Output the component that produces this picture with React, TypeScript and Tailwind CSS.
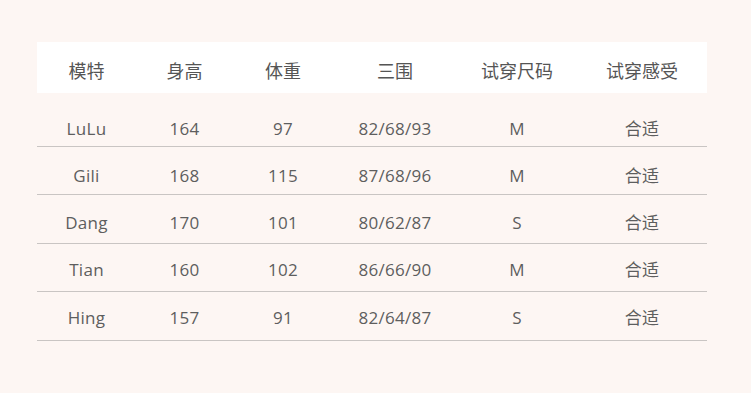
import React from "react";

const cols = ["w-[99px]", "w-[97px]", "w-[100px]", "w-[124px]", "w-[120px]", "w-[130px]"];
const headers = ["模特", "身高", "体重", "三围", "试穿尺码", "试穿感受"];
const rows = [
  ["LuLu", "164", "97", "82/68/93", "M", "合适"],
  ["Gili", "168", "115", "87/68/96", "M", "合适"],
  ["Dang", "170", "101", "80/62/87", "S", "合适"],
  ["Tian", "160", "102", "86/66/90", "M", "合适"],
  ["Hing", "157", "91", "82/64/87", "S", "合适"],
];
const pads = ["pb-[5px]", "pb-[6px]", "pb-[8px]", "pb-[9px]", "pb-[10px]"];

export default function App() {
  return (
    <div
      className="w-[751px] h-[393px] bg-[#fdf6f3] pt-[42px] pl-[37px]"
      style={{ fontFamily: '"Open Sans", "Noto Sans CJK SC", sans-serif' }}
    >
      <div className="w-[670px]">
        <div className="flex h-[51px] bg-white pt-[6px] items-center text-[18px] text-[#555]">
          {headers.map((h, i) => (
            <div key={i} className={`${cols[i]} text-center leading-[24px]`}>
              {h}
            </div>
          ))}
        </div>
        <div className="h-[5px]" />
        {rows.map((r, ri) => (
          <div
            key={ri}
            className={`flex h-[48.5px] items-end ${pads[ri]} border-b border-[#c9c5c3] text-[17px] text-[#5e5e5e]`}
          >
            {r.map((c, i) => (
              <div key={i} className={`${cols[i]} text-center leading-[24px] tracking-[0.3px]`}>
                {c}
              </div>
            ))}
          </div>
        ))}
      </div>
    </div>
  );
}
